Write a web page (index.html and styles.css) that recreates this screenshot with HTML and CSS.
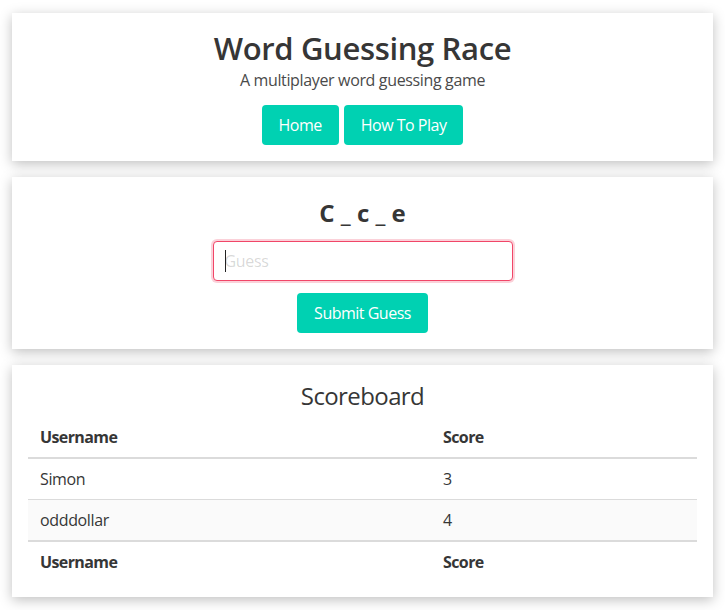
FILE: index.html
```html
<!DOCTYPE html>
<html lang="en">
<head>
<meta charset="utf-8">
<title>Word Guessing Race</title>
<link rel="stylesheet" href="styles.css">
</head>
<body>
<main class="page">
  <section class="card card-header">
    <h1 class="title">Word Guessing Race</h1>
    <p class="subtitle">A multiplayer word guessing game</p>
    <div class="buttons">
      <a class="button" href="#">Home</a>
      <a class="button" href="#">How To Play</a>
    </div>
  </section>

  <section class="card card-game">
    <h2 class="word">C _ c _ e</h2>
    <div class="field">
      <input class="input" type="text" placeholder="Guess">
      <span class="caret"></span>
    </div>
    <button class="button" type="button">Submit Guess</button>
  </section>

  <section class="card card-score">
    <h2 class="board-title">Scoreboard</h2>
    <table class="table">
      <thead>
        <tr><th class="col-user">Username</th><th>Score</th></tr>
      </thead>
      <tbody>
        <tr><td>Simon</td><td>3</td></tr>
        <tr><td>odddollar</td><td>4</td></tr>
      </tbody>
      <tfoot>
        <tr><th>Username</th><th>Score</th></tr>
      </tfoot>
    </table>
  </section>
</main>
</body>
</html>
```

FILE: styles.css
```css
* { box-sizing: border-box; }

html, body {
  margin: 0;
  padding: 0;
  background: #ffffff;
}

body {
  font-family: "Open Sans", "Noto Sans", sans-serif;
  font-size: 16px;
  line-height: 1.5;
  letter-spacing: -0.35px;
  color: #4a4a4a;
}

.page {
  display: flex;
  flex-direction: column;
  gap: 16px;
  padding: 13px 12px 13px;
}

.card {
  background: #fff;
  box-shadow: 0 3px 12px rgba(0, 0, 0, 0.25);
  display: flex;
  flex-direction: column;
  align-items: center;
  padding: 0 16px;
}

.card-header { padding-top: 17px; padding-bottom: 16px; }

.title {
  margin: 0;
  font-size: 31px;
  font-weight: 600;
  line-height: 36px;
  letter-spacing: -0.35px;
  color: #363636;
}

.subtitle {
  margin: 2px 0 0;
  font-size: 16px;
  line-height: 24px;
  color: #4a4a4a;
}

.buttons {
  display: flex;
  gap: 5px;
  margin-top: 13px;
}

.button {
  display: inline-flex;
  align-items: center;
  justify-content: center;
  height: 40px;
  padding: 0 16px;
  border: 1px solid transparent;
  border-radius: 4px;
  background: #00d1b2;
  color: #fff;
  font-family: inherit;
  font-size: 16px;
  letter-spacing: -0.5px;
  text-decoration: none;
  cursor: pointer;
}

.card-game { padding-top: 22px; padding-bottom: 16px; }

.word {
  margin: 0;
  font-size: 24px;
  font-weight: 700;
  line-height: 27px;
  letter-spacing: 0;
  color: #363636;
}

.field {
  position: relative;
  width: 300px;
  margin: 15px 0 12px;
}

.input {
  display: block;
  width: 100%;
  height: 40px;
  padding: 0 11px;
  border: 1px solid #f14668;
  border-radius: 4px;
  box-shadow: 0 0 0 2px rgba(241, 70, 104, 0.25);
  font-family: inherit;
  font-size: 16px;
  letter-spacing: -0.35px;
  color: #363636;
  outline: none;
}

.input::placeholder { color: rgba(54, 54, 54, 0.2); }

.caret {
  position: absolute;
  left: 12px;
  top: 9px;
  width: 1px;
  height: 22px;
  background: #222;
}

.card-score { padding-top: 17px; padding-bottom: 15px; align-items: stretch; }

.board-title {
  margin: 0 0 8px;
  text-align: center;
  font-size: 24px;
  font-weight: 400;
  line-height: 27px;
  letter-spacing: -0.6px;
  color: #363636;
}

.table {
  width: 100%;
  border-collapse: collapse;
  color: #363636;
}

.table th, .table td {
  text-align: left;
  padding: 8px 12px;
  line-height: 24px;
  border: 0 solid #dbdbdb;
  border-bottom-width: 1px;
}

.table th { font-weight: 700; letter-spacing: -0.6px; }

.col-user { width: 403px; }

.table thead th { border-bottom-width: 2px; }
.table tfoot th { border-bottom-width: 0; border-top-width: 2px; }
.table tbody tr:last-child td { border-bottom-width: 0; }
.table tbody tr:nth-child(even) { background: #fafafa; }
```
